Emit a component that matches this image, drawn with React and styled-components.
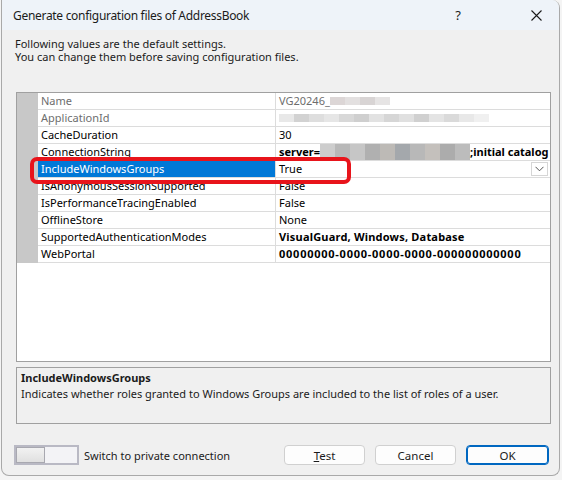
import React from 'react'
import styled, { createGlobalStyle } from 'styled-components'

const GlobalStyle = createGlobalStyle`
  html, body {
    margin: 0;
    padding: 0;
    background: #f4f4f4;
  }
  * {
    box-sizing: border-box;
  }
`

const Window = styled.div`
  margin-left: 1px;
  width: 559px;
  height: 476px;
  border: 1px solid #a9a9a9;
  border-top: none;
  border-radius: 0 8px 8px 8px;
  background: #f0f0f0;
  overflow: hidden;
  display: flex;
  flex-direction: column;
  font-family: "Noto Sans", "Liberation Sans", sans-serif;
  font-size: 11px;
  color: #1b1b1b;
`

const TitleBar = styled.div`
  height: 30px;
  flex: none;
  display: flex;
  align-items: center;
  padding-left: 11px;
  background: #eef3f9;
  font-size: 12px;
`

const Title = styled.div`
  flex: 1;
  letter-spacing: -0.3px;
`

const TitleButton = styled.div`
  width: 46px;
  margin-right: ${({ gap }) => gap || 0}px;
  display: flex;
  justify-content: center;
  align-items: center;
  font-size: 13px;
`

const Intro = styled.div`
  padding: 7px 0 0 13px;
  line-height: 13px;
  height: 62px;
  flex: none;
`

const Grid = styled.div`
  position: relative;
  margin: 0 8px 0 14px;
  height: 270px;
  flex: none;
  border: 1px solid #a0a0a0;
  background: #fff;
  overflow: hidden;
`

const Row = styled.div`
  display: grid;
  grid-template-columns: 21px 238px 1fr;
  height: 17px;
`

const Gutter = styled.div`
  background: #c8c8c8;
`

const Cell = styled.div`
  display: flex;
  align-items: center;
  padding-left: 3px;
  border-bottom: 1px solid #dcdcdc;
  white-space: nowrap;
  overflow: hidden;
  line-height: 16px;
  color: ${({ readOnly }) => (readOnly ? '#6d6d6d' : '#000')};
  font-weight: ${({ bold }) => (bold ? 700 : 400)};
  letter-spacing: ${({ spacing }) => spacing || 0}px;
`

const NameCell = styled(Cell)`
  border-right: 1px solid #dcdcdc;
  background: ${({ selected }) => (selected ? '#0078d7' : 'transparent')};
  color: ${({ selected, readOnly }) => (selected ? '#fff' : readOnly ? '#6d6d6d' : '#000')};
`

const ValueCell = styled(Cell)`
  padding-right: 2px;
`

const Blur = styled.span`
  display: inline-block;
  flex: none;
  width: ${({ w }) => w}px;
  height: ${({ h }) => h}px;
  background: ${({ c }) => c};
`

const DropButton = styled.div`
  margin-left: auto;
  width: 17px;
  height: 14px;
  border: 1px solid #d6d6d6;
  background: #fff;
  display: flex;
  align-items: center;
  justify-content: center;
`

const Highlight = styled.div`
  position: absolute;
  left: 13px;
  top: 64px;
  width: 321px;
  height: 27px;
  border: 4px solid #e8141b;
  border-radius: 7px;
`

const Description = styled.div`
  margin: 5px 8px 0 14px;
  height: 57px;
  flex: none;
  border: 1px solid #a0a0a0;
  padding: 2px 0 0 4px;
  line-height: 16px;
`

const DescTitle = styled.div`
  font-weight: 700;
`

const Footer = styled.div`
  flex: none;
  margin-top: 21px;
  padding: 0 10px 0 12px;
  display: flex;
  align-items: center;
  height: 20px;
`

const Toggle = styled.div`
  width: 65px;
  height: 20px;
  border: 2px solid #b9b9c4;
  background: #f3f3f6;
  display: flex;
`

const Knob = styled.div`
  width: 29px;
  height: 16px;
  border: 1px solid #a8a8b0;
  background: linear-gradient(#f2f2f2, #e0e0e0);
`

const ToggleLabel = styled.div`
  margin-left: 5px;
  flex: 1;
`

const Button = styled.button`
  width: ${({ w }) => w}px;
  height: 20px;
  margin-left: 10px;
  border: 1px solid ${({ primary }) => (primary ? '#0067c0' : '#d0d0d0')};
  box-shadow: ${({ primary }) => (primary ? 'inset 0 0 0 1px #0067c0' : 'none')};
  border-radius: 4px;
  background: #fdfdfd;
  font-family: inherit;
  font-size: 11.5px;
  color: #1b1b1b;
  padding: 0;
`

const nameBlur = ['#dcd6d6', '#e3e0e0', '#d8d4d4', '#e6e4e4']
const appBlur = ['#e8e8e8', '#d2d2d2', '#dedede', '#e6e6e6', '#d8d8d8', '#cfcfcf', '#e2e2e2', '#d6d6d6', '#e0e0e0', '#d0d0d0', '#e4e4e4', '#dadada', '#e8e8e8', '#f0f0f0']
const connBlur = ['#cdcdcd', '#b8b8b8', '#c6c6c6', '#b0b0b0', '#bdbab6', '#a4a8ac', '#b8b8b8', '#c4c0bc', '#acacac', '#bcbcbc']

const rows = [
  { name: 'Name', readOnly: true, value: 'VG20246_', blur: nameBlur, bw: 15, bh: 8 },
  { name: 'ApplicationId', readOnly: true, value: '', blur: appBlur, bw: 15, bh: 8 },
  { name: 'CacheDuration', value: '30' },
  { name: 'ConnectionString', value: 'server=', bold: true, blur: connBlur, bw: 15, bh: 16, suffix: ';initial catalog' },
  { name: 'IncludeWindowsGroups', value: 'True', selected: true, drop: true },
  { name: 'IsAnonymousSessionSupported', value: 'False' },
  { name: 'IsPerformanceTracingEnabled', value: 'False' },
  { name: 'OfflineStore', value: 'None' },
  { name: 'SupportedAuthenticationModes', value: 'VisualGuard, Windows, Database', bold: true, spacing: 0.2 },
  { name: 'WebPortal', value: '00000000-0000-0000-0000-000000000000', bold: true, spacing: 0.75 },
]

const Chevron = () => (
  <svg width="9" height="6" viewBox="0 0 9 6">
    <path d="M0.5 0.8 L4.5 4.8 L8.5 0.8" fill="none" stroke="#555" strokeWidth="1" />
  </svg>
)

const Close = () => (
  <svg width="11" height="11" viewBox="0 0 11 11">
    <path d="M0.5 0.5 L10.5 10.5 M10.5 0.5 L0.5 10.5" stroke="#1b1b1b" strokeWidth="1.1" />
  </svg>
)

const App = () => (
  <>
    <GlobalStyle />
    <Window>
      <TitleBar>
        <Title>Generate configuration files of AddressBook</Title>
        <TitleButton gap={32}>?</TitleButton>
        <TitleButton><Close /></TitleButton>
      </TitleBar>
      <Intro>
        Following values are the default settings.<br />
        You can change them before saving configuration files.
      </Intro>
      <Grid>
        {rows.map((r) => (
          <Row key={r.name}>
            <Gutter />
            <NameCell selected={r.selected} readOnly={r.readOnly}>{r.name}</NameCell>
            <ValueCell readOnly={r.readOnly} bold={r.bold} spacing={r.spacing}>
              {r.value}
              {r.blur && r.blur.map((c, i) => <Blur key={i} c={c} w={r.bw} h={r.bh} />)}
              {r.suffix}
              {r.drop && <DropButton><Chevron /></DropButton>}
            </ValueCell>
          </Row>
        ))}
        <Highlight />
      </Grid>
      <Description>
        <DescTitle>IncludeWindowsGroups</DescTitle>
        Indicates whether roles granted to Windows Groups are included to the list of roles of a user.
      </Description>
      <Footer>
        <Toggle><Knob /></Toggle>
        <ToggleLabel>Switch to private connection</ToggleLabel>
        <Button w={81}><u>T</u>est</Button>
        <Button w={81}>Cancel</Button>
        <Button w={83} primary>OK</Button>
      </Footer>
    </Window>
  </>
)

export default App
